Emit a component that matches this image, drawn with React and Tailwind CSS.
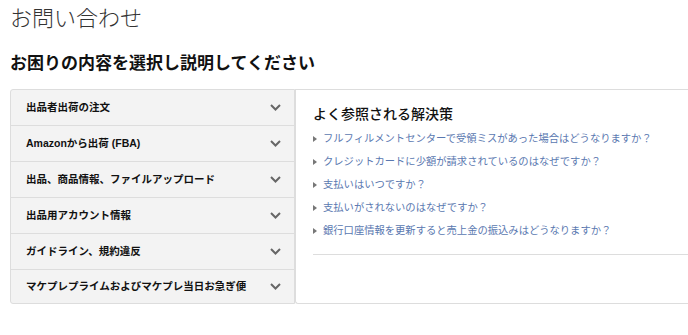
const CATEGORIES = [
  '出品者出荷の注文',
  'Amazonから出荷 (FBA)',
  '出品、商品情報、ファイルアップロード',
  '出品用アカウント情報',
  'ガイドライン、規約違反',
  'マケプレプライムおよびマケプレ当日お急ぎ便',
]

const SOLUTIONS = [
  'フルフィルメントセンターで受領ミスがあった場合はどうなりますか？',
  'クレジットカードに少額が請求されているのはなぜですか？',
  '支払いはいつですか？',
  '支払いがされないのはなぜですか？',
  '銀行口座情報を更新すると売上金の振込みはどうなりますか？',
]

function Chevron() {
  return (
    <svg width="11" height="7" viewBox="0 0 11 7" className="flex-shrink-0">
      <path d="M1 1l4.5 4.5L10 1" fill="none" stroke="#666" strokeWidth="2" />
    </svg>
  )
}

export default function App() {
  return (
    <div className="w-[688px] h-[335px] overflow-hidden bg-white text-[#111]"
      style={{ fontFamily: '"Liberation Sans", "Noto Sans CJK JP", sans-serif' }}>

      <h1 className="pl-[10px] pt-[5px] text-[22px] leading-[28px] font-light text-[#333]">お問い合わせ</h1>
      <h2 className="pl-[10px] mt-[20px] text-[17px] leading-[22px] font-bold">お困りの内容を選択し説明してください</h2>

      <div className="flex mt-[14px] pl-[10px]">
        {/* Categories */}
        <div className="w-[285px] h-[215px] overflow-hidden border border-[#ddd] rounded-l-[3px] bg-[#f3f3f3] divide-y divide-[#ddd]">
          {CATEGORIES.map((c) => (
            <div key={c} className="h-[36px] last:h-[33px] flex items-center justify-between pl-[15px] pr-[13px]">
              <span className="text-[10.5px] font-bold text-[#111]">{c}</span>
              <Chevron />
            </div>
          ))}
        </div>

        {/* Solutions */}
        <div className="flex-1 h-[215px] border border-r-0 border-[#ddd] rounded-bl-[3px] pl-[17px] pt-[15px]">
          <p className="text-[14px] leading-[18px] font-medium text-[#111]">よく参照される解決策</p>
          <ul className="mt-[4px]">
            {SOLUTIONS.map((s) => (
              <li key={s} className="h-[23px] flex items-center gap-[6px]">
                <span className="w-0 h-0 border-y-[3px] border-y-transparent border-l-[4px] border-l-[#777]" />
                <span className="text-[10.3px] text-[#5a78b0]">{s}</span>
              </li>
            ))}
          </ul>
          <div className="mt-[12px] border-t border-[#ddd]" />
        </div>
      </div>
    </div>
  )
}
